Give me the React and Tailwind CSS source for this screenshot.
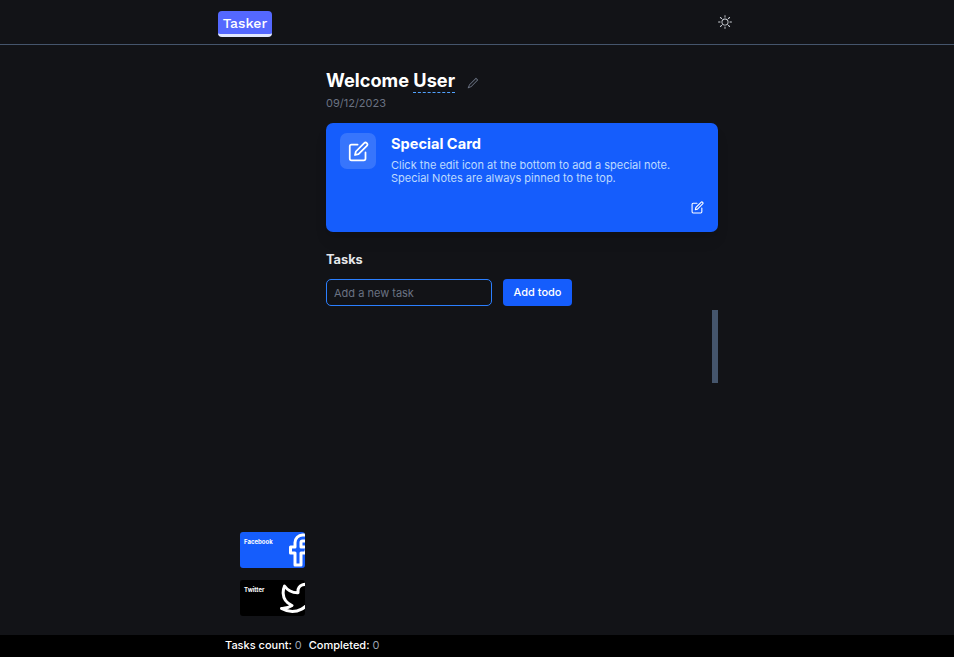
import { FiEdit, FiFacebook, FiTwitter } from "react-icons/fi";
import { BsSun } from "react-icons/bs";
import { RxPencil1 } from "react-icons/rx";

function Header() {
  return (
    <header className="h-[45px] shrink-0 border-b border-slate-600">
      <div className="mx-auto flex h-full w-[518px] items-center justify-between">
        <div className="mt-[3px] h-[26px] w-[54px] rounded-[4px] border-b-[3px] border-indigo-100 bg-[#5468ff] text-center font-['Work_Sans',Inter,sans-serif] text-[14px] leading-[24px] font-medium text-white">
          Tasker
        </div>
        <BsSun className="mr-1 size-[14px] text-gray-300" />
      </div>
    </header>
  );
}

function SpecialCard() {
  return (
    <section className="mt-3 flex h-[109px] rounded-[7px] bg-blue-600 pt-[10px] pr-[14px] pb-[18px] pl-[14px] shadow-lg">
      <div className="flex size-9 shrink-0 items-center justify-center rounded-[7px] bg-white/15">
        <FiEdit className="size-[21px] text-white" />
      </div>
      <div className="ml-[15px] flex-1">
        <h2 className="mt-[1px] text-[14.6px] leading-5 font-bold text-white">Special Card</h2>
        <p className="mt-[5px] text-[11px] leading-[13px] whitespace-nowrap text-blue-200">
          Click the edit icon at the bottom to add a special note.
          <br />
          Special Notes are always pinned to the top.
        </p>
      </div>
      <FiEdit className="size-[13px] shrink-0 self-end text-white" />
    </section>
  );
}

function SocialCard({ label, icon: Icon, className }) {
  return (
    <a className={`flex h-9 w-[65px] overflow-hidden rounded-[3px] ${className}`}>
      <span className="mt-[6px] ml-1 w-9 shrink-0 text-[6px] leading-[8px] font-bold text-white">{label}</span>
      <Icon className="size-[36px] shrink-0 text-white" />
    </a>
  );
}

export default function App() {
  return (
    <div className="flex h-screen flex-col overflow-hidden bg-[#121317] font-[Inter,sans-serif]">
      <Header />
      <div className="mx-auto flex w-[518px] flex-1">
        <aside className="flex w-[108px] flex-col justify-end gap-3 pb-[19px] pl-[22px]">
          <SocialCard label="Facebook" icon={FiFacebook} className="bg-blue-600" />
          <SocialCard label="Twitter" icon={FiTwitter} className="bg-black" />
        </aside>
        <main className="w-[392px] pt-[23px]">
          <div className="flex h-[26px] items-start">
            <h1 className="text-[18.2px] leading-6 font-bold whitespace-nowrap text-white">
              Welcome <span className="inline-block border-b border-dashed border-blue-400">User</span>
            </h1>
            <RxPencil1 className="mt-[9px] ml-[11px] size-[13px] text-gray-500" />
          </div>
          <p className="mt-[1px] text-[11px] leading-4 text-gray-500">09/12/2023</p>
          <SpecialCard />
          <h2 className="mt-[19px] text-[12.8px] leading-[18px] font-bold text-gray-200">Tasks</h2>
          <div className="mt-[10px] flex gap-[11px]">
            <input
              className="h-[27px] w-[166px] rounded-[5px] border border-blue-500 bg-transparent px-[7px] text-[11px] outline-none placeholder:text-gray-500"
              placeholder="Add a new task"
            />
            <button className="h-[27px] w-[69px] rounded-[4px] bg-blue-600 text-[11px] font-medium text-white">
              Add todo
            </button>
          </div>
          <div className="mt-1 flex h-[73px] justify-end">
            <div className="w-[6px] bg-slate-600" />
          </div>
        </main>
      </div>
      <footer className="h-[22px] shrink-0 bg-black">
        <div className="mx-auto flex w-[518px] gap-[7px] pl-[7px] text-[11px] leading-[21px] font-medium text-white">
          <span>
            Tasks count: <span className="font-normal text-gray-400">0</span>
          </span>
          <span>
            Completed: <span className="font-normal text-gray-400">0</span>
          </span>
        </div>
      </footer>
    </div>
  );
}
